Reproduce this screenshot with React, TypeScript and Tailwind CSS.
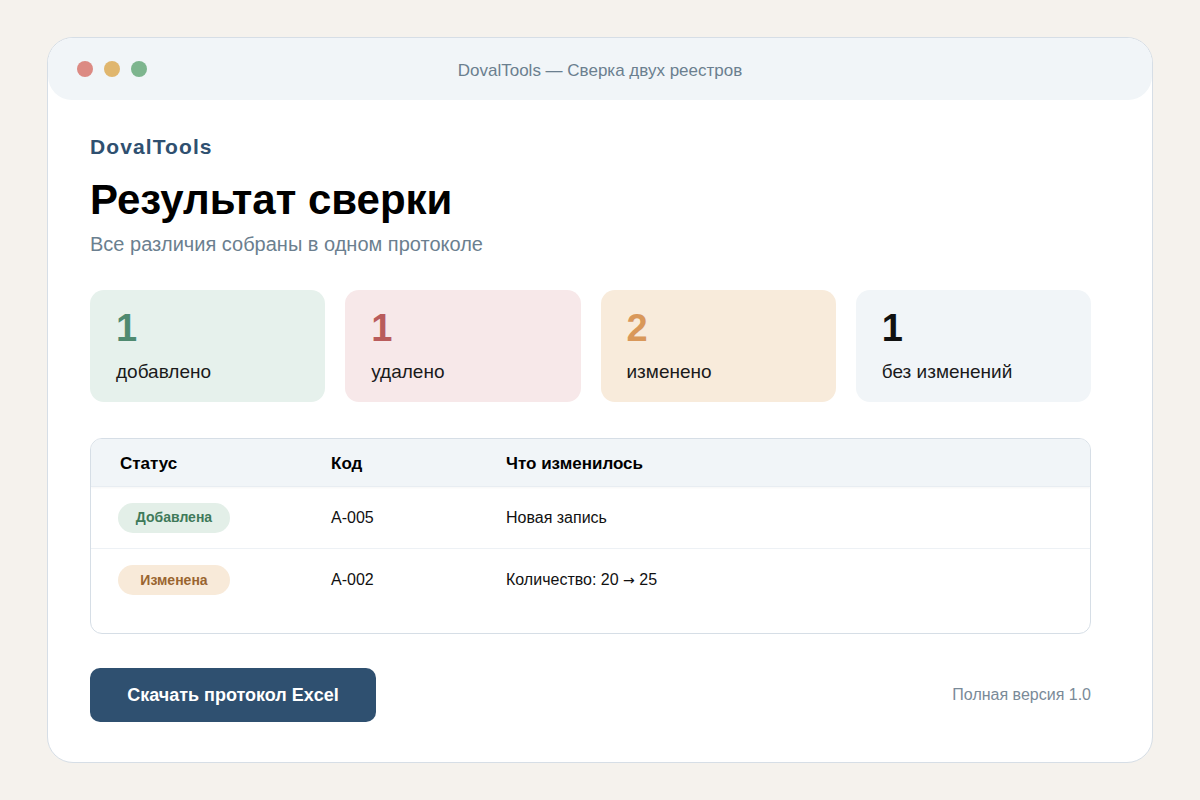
import React from "react";

const font = { fontFamily: '"Liberation Sans", Arial, sans-serif' };

function Card({ n, label, bg, color }: { n: string; label: string; bg: string; color: string }) {
  return (
    <div className={`rounded-[14px] h-[112px] pl-[26px] pt-[17px] ${bg}`}>
      <div className={`text-[38px] leading-[42px] font-bold ${color}`}>{n}</div>
      <div className="mt-[10px] text-[19px] leading-[26px] text-[#1a1a1a]">{label}</div>
    </div>
  );
}

export default function App() {
  return (
    <div className="w-[1200px] h-[800px] bg-[#f5f2ed] pt-[37px]" style={font}>
      <div className="mx-auto w-[1106px] h-[726px] bg-white rounded-[26px] border-[1.5px] border-[#d6dee6] overflow-hidden flex flex-col">
        <div className="h-[62px] bg-[#f1f5f8] rounded-[24px] flex items-center relative shrink-0">
          <div className="flex gap-[11px] pl-[29px]">
            <span className="w-[16px] h-[16px] rounded-full bg-[#dc8a83]" />
            <span className="w-[16px] h-[16px] rounded-full bg-[#e0b66e]" />
            <span className="w-[16px] h-[16px] rounded-full bg-[#7db58e]" />
          </div>
          <div className="absolute inset-0 flex items-center justify-center text-[17px] text-[#6b7f8f] pt-[3px]">
            DovalTools — Сверка двух реестров
          </div>
        </div>
        <div className="pl-[42px] pr-[61px] pt-[35px] flex flex-col">
          <div className="text-[21px] leading-[24px] font-bold text-[#2f5070] tracking-[1.1px]">DovalTools</div>
          <div className="mt-[17px] text-[42px] leading-[48px] font-bold text-black">Результат сверки</div>
          <div className="mt-[7px] text-[20px] leading-[26px] text-[#6b7f8f]">Все различия собраны в одном протоколе</div>
          <div className="mt-[33px] grid grid-cols-4 gap-[20px]">
            <Card n="1" label="добавлено" bg="bg-[#e6f1ec]" color="text-[#4f8a70]" />
            <Card n="1" label="удалено" bg="bg-[#f7e8e9]" color="text-[#b95c5c]" />
            <Card n="2" label="изменено" bg="bg-[#f8ebdb]" color="text-[#d9985a]" />
            <Card n="1" label="без изменений" bg="bg-[#f1f5f8]" color="text-[#111111]" />
          </div>
          <div className="mt-[36px] h-[196px] rounded-[12px] border-[1.5px] border-[#d6dee6] overflow-hidden">
            <div className="h-[48px] bg-[#f1f5f8] flex items-center text-[17px] font-bold text-black border-b border-[#e8edf2] shadow-[0_1px_2px_rgba(0,0,0,0.04)] pt-[3px]">
              <div className="w-[240px] pl-[29px]">Статус</div>
              <div className="w-[175px]">Код</div>
              <div>Что изменилось</div>
            </div>
            <div className="h-[62px] flex items-center text-[16px] text-[#111] border-b-[1.5px] border-[#edf1f5]">
              <div className="w-[240px] pl-[27px]">
                <span className="inline-flex items-center justify-center w-[112px] h-[30px] rounded-full bg-[#e3efe8] text-[#3f7a5a] text-[14px] font-bold">Добавлена</span>
              </div>
              <div className="w-[175px]">A-005</div>
              <div>Новая запись</div>
            </div>
            <div className="h-[62px] flex items-center text-[16px] text-[#111]">
              <div className="w-[240px] pl-[27px]">
                <span className="inline-flex items-center justify-center w-[112px] h-[30px] rounded-full bg-[#f8ead9] text-[#9a6530] text-[14px] font-bold">Изменена</span>
              </div>
              <div className="w-[175px]">A-002</div>
              <div>
                Количество: 20 <span className="font-['DejaVu_Sans'] text-[14px]">→</span> 25
              </div>
            </div>
          </div>
          <div className="mt-[34px] flex items-center justify-between">
            <button className="w-[286px] h-[54px] rounded-[10px] bg-[#2f5070] text-white text-[18px] font-bold">Скачать протокол Excel</button>
            <div className="text-[16px] text-[#7a8a98]">Полная версия 1.0</div>
          </div>
        </div>
      </div>
    </div>
  );
}
